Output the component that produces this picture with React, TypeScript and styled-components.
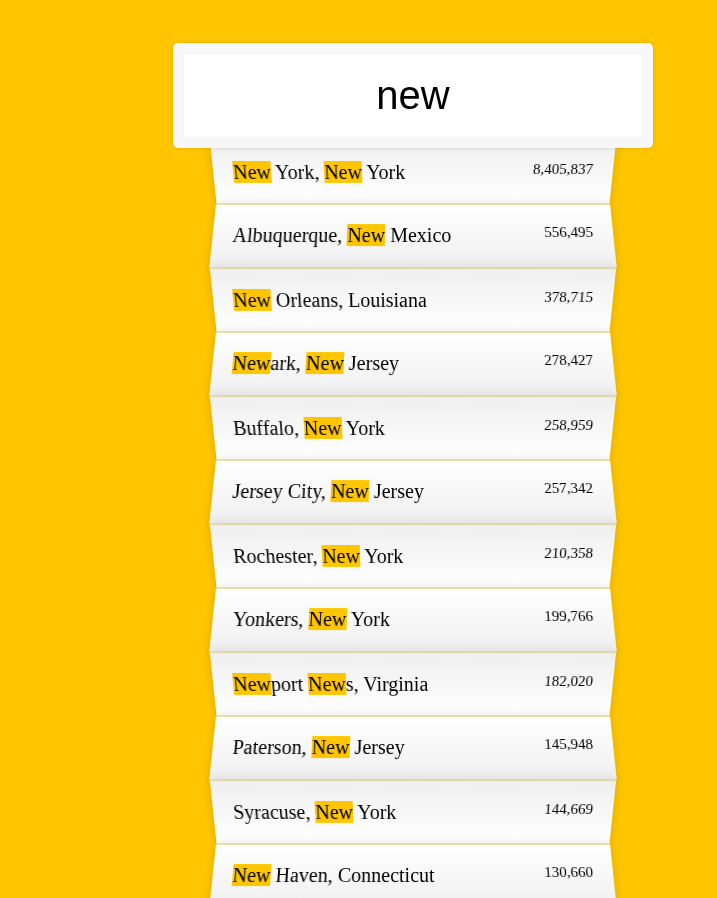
import React from "react";
import styled, { createGlobalStyle } from "styled-components";

const Global = createGlobalStyle`
  html {
    box-sizing: border-box;
    background: #ffc600;
    font-family: "Liberation Serif", "Times New Roman", serif;
    font-size: 20px;
    font-weight: 200;
    overflow: hidden;
  }
  *, *:before, *:after { box-sizing: inherit; }
  body { margin: 0; }
`;

const Form = styled.form`
  width: 400px;
  margin: 33px 0 0 213px;
`;

const Search = styled.input`
  display: block;
  margin: 0;
  padding: 20px;
  text-align: center;
  outline: 0;
  border: 10px solid #f7f7f7;
  width: 120%;
  left: -10%;
  position: relative;
  top: 10px;
  z-index: 2;
  border-radius: 5px;
  font-family: "Liberation Sans", Arial, sans-serif;
  font-size: 40px;
  color: #000;
  background: #fff;
  box-shadow: 0 0 5px rgba(0, 0, 0, 0.12), inset 0 0 2px rgba(0, 0, 0, 0.19);
`;

const Suggestions = styled.ul`
  margin: 0;
  padding: 0;
  position: relative;
`;

const Item = styled.li<{ $even: boolean }>`
  list-style: none;
  border-bottom: 1px solid #d8d8d8;
  box-shadow: 0 0 10px rgba(0, 0, 0, 0.14);
  margin: 0;
  padding: 20px;
  display: flex;
  justify-content: space-between;
  text-transform: capitalize;
  color: #000;
  transform: ${(p) =>
    p.$even
      ? "perspective(100px) rotateX(3deg) translateY(2px) scale(1.001)"
      : "perspective(100px) rotateX(-3deg) translateY(3px)"};
  background: ${(p) =>
    p.$even
      ? "linear-gradient(to bottom, #ffffff 0%, #efefef 100%)"
      : "linear-gradient(to top, #ffffff 0%, #efefef 100%)"};
`;

const Name = styled.span``;

const Population = styled.span`
  font-size: 15px;
`;

const Hl = styled.span`
  background: #ffc600;
`;

const cities: [string, string][] = [
  ["New York, New York", "8,405,837"],
  ["Albuquerque, New Mexico", "556,495"],
  ["New Orleans, Louisiana", "378,715"],
  ["Newark, New Jersey", "278,427"],
  ["Buffalo, New York", "258,959"],
  ["Jersey City, New Jersey", "257,342"],
  ["Rochester, New York", "210,358"],
  ["Yonkers, New York", "199,766"],
  ["Newport News, Virginia", "182,020"],
  ["Paterson, New Jersey", "145,948"],
  ["Syracuse, New York", "144,669"],
  ["New Haven, Connecticut", "130,660"],
];

function highlight(text: string, q: string) {
  const parts = text.split(new RegExp(`(${q})`, "gi"));
  return parts.map((p, i) =>
    p.toLowerCase() === q.toLowerCase() ? <Hl key={i}>{p}</Hl> : <React.Fragment key={i}>{p}</React.Fragment>
  );
}

export default function App() {
  const q = "new";
  return (
    <>
      <Global />
      <Form onSubmit={(e) => e.preventDefault()}>
        <Search type="text" defaultValue={q} />
        <Suggestions>
          {cities.map(([name, pop], i) => (
            <Item key={name} $even={i % 2 === 1}>
              <Name>{highlight(name, q)}</Name>
              <Population>{pop}</Population>
            </Item>
          ))}
        </Suggestions>
      </Form>
    </>
  );
}
